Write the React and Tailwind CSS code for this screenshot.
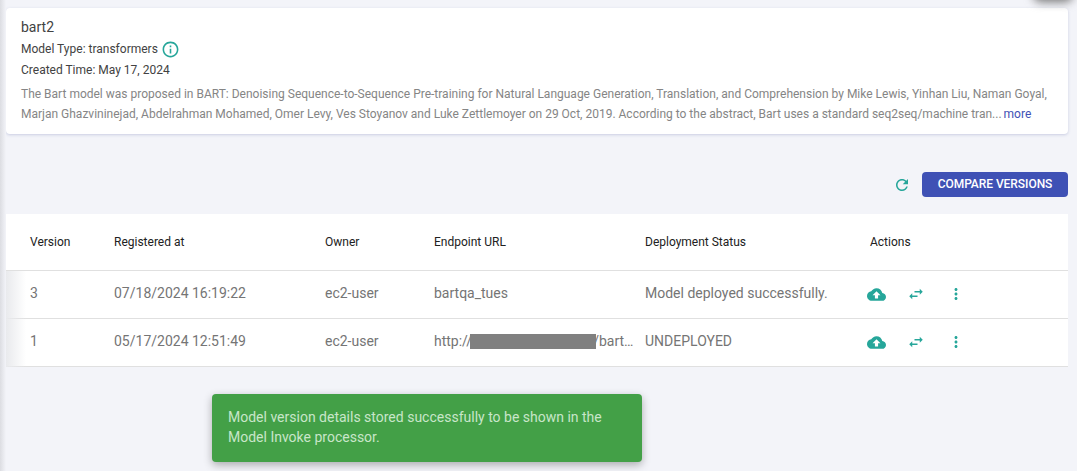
const TEAL = "#26a69a";
const Ico = ({ d, size, className = "" }) => (
  <svg width={size} height={size} viewBox="0 0 24 24" fill={TEAL} className={className}><path d={d} /></svg>
);
const P = {
  cloud: "M19.35 10.04C18.67 6.59 15.64 4 12 4 9.11 4 6.6 5.64 5.35 8.04 2.34 8.36 0 10.91 0 14c0 3.31 2.69 6 6 6h13c2.76 0 5-2.24 5-5 0-2.64-2.05-4.78-4.65-4.96zM14 13v4h-4v-4H7l5-5 5 5h-3z",
  refresh: "M17.65 6.35C16.2 4.9 14.21 4 12 4c-4.42 0-7.99 3.58-7.99 8s3.57 8 7.99 8c3.73 0 6.84-2.55 7.73-6h-2.08c-.82 2.33-3.04 4-5.65 4-3.31 0-6-2.69-6-6s2.69-6 6-6c1.66 0 3.14.69 4.22 1.78L13 11h7V4l-2.35 2.35z",
  more: "M12 8c1.1 0 2-.9 2-2s-.9-2-2-2-2 .9-2 2 .9 2 2 2zm0 2c-1.1 0-2 .9-2 2s.9 2 2 2 2-.9 2-2-.9-2-2-2zm0 6c-1.1 0-2 .9-2 2s.9 2 2 2 2-.9 2-2-.9-2-2-2z",
  swap: "M6.99 11L3 15l3.99 4v-3H14v-2H6.99v-3zM21 9l-3.99-4v3H10v2h7.01v3L21 9z",
  info: "M11 7h2v2h-2zm0 4h2v6h-2zm1-9C6.48 2 2 6.48 2 12s4.48 10 10 10 10-4.48 10-10S17.52 2 12 2zm0 18c-4.41 0-8-3.59-8-8s3.59-8 8-8 8 3.59 8 8-3.59 8-8 8z",
};
const COLS = "grid grid-cols-[84px_211px_109px_211px_225px_1fr] pl-6 items-center";
const Actions = () => (
  <div className="-ml-[3px] mt-[2px] flex items-center">
    <Ico d={P.cloud} size={19} />
    <Ico d={P.swap} size={18} className="ml-[21px]" />
    <Ico d={P.more} size={18} className="ml-[22px]" />
  </div>
);
const Row = ({ v, date, url, status }) => (
  <div className={`${COLS} h-12 border-b border-[#e0e0e0] pb-[3px] text-sm text-[#757575]`}>
    <div>{v}</div><div>{date}</div><div>ec2-user</div><div>{url}</div><div>{status}</div><Actions />
  </div>
);
export default function App() {
  return (
    <div className="relative w-[1077px] h-[471px] overflow-hidden bg-[#f3f4f9] pl-[6px] pr-[9px] pt-2 font-['Roboto',sans-serif]">
      <div className="h-[126px] rounded bg-white px-[15px] pt-[9px] shadow-[0_1px_3px_rgba(80,90,160,0.25)]">
        <div className="text-sm leading-5 text-[#424242]">bart2</div>
        <div className="mt-[2px] flex h-5 items-center text-xs text-[#424242]">
          Model Type: transformers
          <Ico d={P.info} size={19} className="ml-[3px]" />
        </div>
        <div className="h-5 pt-px text-xs leading-5 text-[#424242]">Created Time: May 17, 2024</div>
        <div className="mt-[5px] text-xs leading-5 text-[#858585]">
          The Bart model was proposed in BART: Denoising Sequence-to-Sequence Pre-training for Natural Language Generation, Translation, and Comprehension by Mike Lewis, Yinhan Liu, Naman Goyal, Marjan Ghazvininejad, Abdelrahman Mohamed, Omer Levy, Ves Stoyanov and Luke Zettlemoyer on 29 Oct, 2019. According to the abstract, Bart uses a standard seq2seq/machine tran... <span className="-ml-px text-[#3f51b5]">more</span>
        </div>
      </div>
      <div className="mt-[38px] flex h-[25px] items-center justify-end">
        <Ico d={P.refresh} size={18} />
        <button className="ml-[11px] h-[25px] w-[146px] rounded bg-[#3f51b5] pb-px text-xs font-medium tracking-[-0.05px] text-white">COMPARE VERSIONS</button>
      </div>
      <div className="mt-[17px] bg-white">
        <div className={`${COLS} h-[57px] border-b border-[#e0e0e0] text-xs text-[#212121]`}>
          <div>Version</div><div>Registered at</div><div>Owner</div><div>Endpoint URL</div><div>Deployment Status</div><div>Actions</div>
        </div>
        <Row v="3" date="07/18/2024 16:19:22" url="bartqa_tues" status="Model deployed successfully." />
        <Row v="1" date="05/17/2024 12:51:49" url={<span className="flex items-center">http://<span className="relative z-10 -ml-[2px] h-[15px] w-[126px] bg-[#808080]" /><span className="-ml-[3px]">/bart…</span></span>} status="UNDEPLOYED" />
      </div>
      <div className="absolute left-0 top-0 h-full w-[6px] bg-gradient-to-r from-[#dcdde2] to-[#f3f4f9]" />
      <div className="absolute left-[6px] top-[271px] h-[96px] w-5 bg-gradient-to-r from-[#e9eaed] to-transparent" />
      <div className="absolute right-[4px] top-[-14px] h-4 w-[40px] rounded-full bg-[#777] blur-[5px]" />
      <div className="absolute left-[212px] top-[394px] h-[68px] w-[430px] rounded bg-[#43a047] px-4 py-[13px] text-sm leading-5 text-[#c8e6c9] shadow-[0_3px_8px_rgba(0,0,0,0.3)]">
        Model version details stored successfully to be shown in the Model Invoke processor.
      </div>
    </div>
  );
}
